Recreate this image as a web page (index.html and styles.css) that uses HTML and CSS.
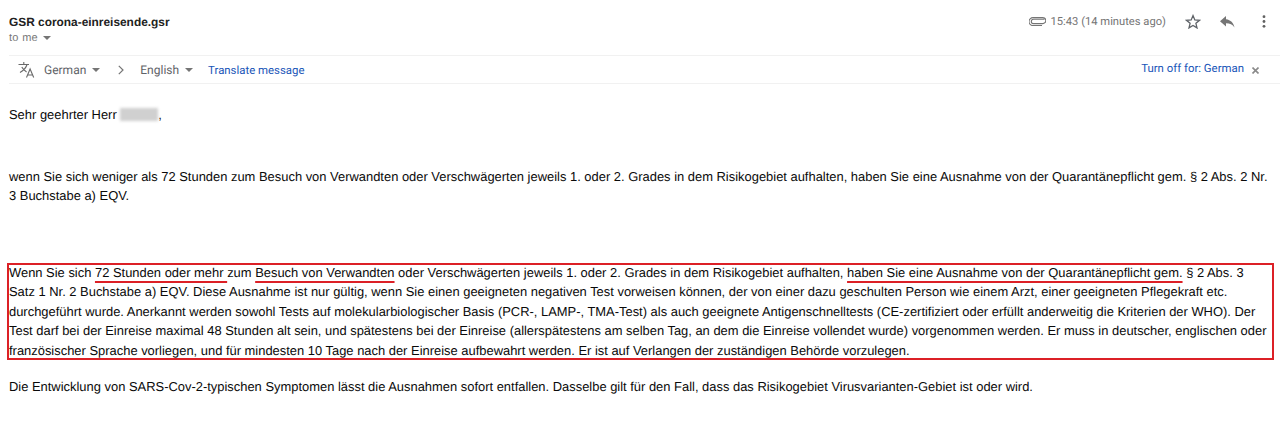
FILE: index.html
```html
<!DOCTYPE html>
<html lang="de">
<head>
<meta charset="utf-8">
<title>GSR corona-einreisende.gsr</title>
<link rel="stylesheet" href="styles.css">
</head>
<body>
<header class="head">
  <div class="sender">
    <div class="subject">GSR corona-einreisende.gsr</div>
    <div class="tome">to me <svg class="caret" width="8" height="4" viewBox="0 0 8 4"><path d="M0 0h8L4 4z"/></svg></div>
  </div>
  <div class="meta">
    <svg class="clip" width="17" height="9" viewBox="0 0 17 9" fill="none" stroke="#757575" stroke-width="1.1"><path d="M15.500 2.200H4.500a2.100 2.100 0 0 0 0 4.400h9.300a3 3 0 0 0 0-6H4a4 4 0 0 0 0 8h9"/></svg>
    <span class="time">15:43 (14 minutes ago)</span>
    <svg class="star" width="16" height="15" viewBox="0 0 16 15" fill="none" stroke="#5f6368" stroke-width="1.3"><path d="M8 1.600l1.800 4.300 4.700.4-3.600 3 1.100 4.600L8 11.500l-4 2.400 1.100-4.600-3.600-3 4.700-.4z"/></svg>
    <svg class="reply" width="15" height="12" viewBox="0 0 15 12" fill="#757575"><path d="M6 0v3.200C10.800 3.800 13.500 6.800 14.500 11.500 12.500 8.500 10 7.200 6 7.200v3.300L0 5.200z"/></svg>
    <svg class="dots" width="4" height="13" viewBox="0 0 4 13" fill="#616161"><circle cx="2" cy="1.700" r="1.400"/><circle cx="2" cy="6.500" r="1.400"/><circle cx="2" cy="11.300" r="1.400"/></svg>
  </div>
</header>
<div class="translate">
  <svg class="tr-icon" width="17" height="17" viewBox="0 0 17 17" fill="none" stroke="#6a6a6a" stroke-width="1.100"><path d="M.5 3.500h10.500M5.800 1v2.500M9 3.500c-.8 3-3 5.800-7 8M3.800 6c1 2 2.600 3.700 4.800 5M8.500 16.500l3.600-8.500 3.600 8.500M9.600 14h5"/></svg>
  <span class="lang">German</span>
  <svg class="caret lang-caret" width="8" height="4" viewBox="0 0 8 4"><path d="M0 0h8L4 4z"/></svg>
  <svg class="chev" width="6" height="10" viewBox="0 0 6 10" fill="none" stroke="#757575" stroke-width="1.200"><path d="M.8.800 5 5 .8 9.200"/></svg>
  <span class="lang">English</span>
  <svg class="caret lang-caret" width="8" height="4" viewBox="0 0 8 4"><path d="M0 0h8L4 4z"/></svg>
  <span class="link tr-link">Translate message</span>
  <span class="link off">Turn off for: German</span>
  <svg class="close" width="7" height="7" viewBox="0 0 7 7" stroke="#8a8a8a" stroke-width="1.600"><path d="M.5.500l6 6M6.500.500l-6 6"/></svg>
</div>
<main class="body">
  <p class="greet">Sehr geehrter Herr <span class="blur"></span>,</p>
  <p class="intro">wenn Sie sich weniger als 72 Stunden zum Besuch von Verwandten oder Verschwägerten jeweils 1. oder 2. Grades in dem Risikogebiet aufhalten, haben Sie eine Ausnahme von der Quarantänepflicht gem. § 2 Abs. 2 Nr.<br>3 Buchstabe a) EQV.</p>
  <p class="boxed">Wenn Sie sich <span class="mark">72 Stunden oder mehr </span>zum <span class="mark">Besuch von Verwandten</span> oder Verschwägerten jeweils 1. oder 2. Grades in dem Risikogebiet aufhalten, <span class="mark">haben Sie eine Ausnahme von der Quarantänepflicht gem.</span> § 2 Abs. 3<br>Satz 1 Nr. 2 Buchstabe a) EQV. Diese Ausnahme ist nur gültig, wenn Sie einen geeigneten negativen Test vorweisen können, der von einer dazu geschulten Person wie einem Arzt, einer geeigneten Pflegekraft etc.<br>durchgeführt wurde. Anerkannt werden sowohl Tests auf molekularbiologischer Basis (PCR-, LAMP-, TMA-Test) als auch geeignete Antigenschnelltests (CE-zertifiziert oder erfüllt anderweitig die Kriterien der WHO). Der<br>Test darf bei der Einreise maximal 48 Stunden alt sein, und spätestens bei der Einreise (allerspätestens am selben Tag, an dem die Einreise vollendet wurde) vorgenommen werden. Er muss in deutscher, englischen oder<br>französischer Sprache vorliegen, und für mindesten 10 Tage nach der Einreise aufbewahrt werden. Er ist auf Verlangen der zuständigen Behörde vorzulegen.</p>
  <p class="outro">Die Entwicklung von SARS-Cov-2-typischen Symptomen lässt die Ausnahmen sofort entfallen. Dasselbe gilt für den Fall, dass das Risikogebiet Virusvarianten-Gebiet ist oder wird.</p>
</main>
</body>
</html>
```

FILE: styles.css
```css
* { box-sizing: border-box; }
html, body { margin: 0; padding: 0; }
body {
  width: 1280px;
  height: 421px;
  overflow: hidden;
  background: #fff;
  color: #1c1c1c;
  font-family: "Liberation Sans", Arial, sans-serif;
  text-rendering: geometricPrecision;
}
svg { display: block; flex: none; }
.head {
  display: flex;
  justify-content: space-between;
  height: 55px;
  padding: 14px 14px 0 9px;
}
.subject { font-size: 11.900px; line-height: 16px; font-weight: 700; color: #222; }
.tome { display: flex; align-items: center; gap: 5px; margin-top: 1px; font-size: 11px; line-height: 14px; color: #777; letter-spacing: .3px; }
.caret { fill: #757575; }
.meta { display: flex; align-items: flex-start; height: 14px; margin-top: 1px; }
.clip { margin-top: 2px; }
.time { margin-left: 5px; font-family: Roboto, sans-serif; font-size: 11.200px; line-height: 14px; color: #757575; }
.star { margin-left: 19px; margin-top: -1px; }
.reply { margin-left: 19px; margin-top: 1px; }
.dots { margin-left: 27px; margin-top: 0; }
.translate {
  display: flex;
  align-items: center;
  height: 29px;
  margin-left: 9px;
  padding: 0 21px 0 9px;
  border-top: 1px solid #f1f1f1;
  border-bottom: 1px solid #f1f1f1;
}
.tr-icon { margin-right: 9px; }
.lang { font-family: Roboto, sans-serif; color: #5f6368; font-size: 12px; }
.lang-caret { margin-left: 6px; }
.chev { margin: 0 16px 0 18px; }
.link { font-family: Roboto, sans-serif; color: #1a56b8; font-size: 11.400px; }
.tr-link { margin-left: 15px; }
.off { margin-left: auto; margin-top: -3px; margin-right: 2px; }
.close { margin-left: 6px; margin-top: 2px; }
.body { padding: 0 0 0 9px; font-size: 12.930px; line-height: 19.500px; color: #0a0a0a; }
.body p { margin: 0; white-space: nowrap; }
.greet { margin-top: 21px !important; }
.blur {
  display: inline-block;
  width: 38px;
  height: 13px;
  vertical-align: -2px;
  background: #d0d0d0;
  filter: blur(1.500px);
}
.intro { margin-top: 42px !important; }
.boxed {
  margin: 57px 6px 0 -2px !important;
  padding: 0 0 0 2px;
  height: 97px;
  outline: 2px solid #dc2026;
  outline-offset: -2px;
}
.mark {
  text-decoration: underline;
  text-decoration-color: #dc2026;
  text-decoration-thickness: 2px;
  text-underline-offset: 3.500px;
  text-decoration-skip-ink: none;
}
.outro { margin-top: 17px !important; }
```
